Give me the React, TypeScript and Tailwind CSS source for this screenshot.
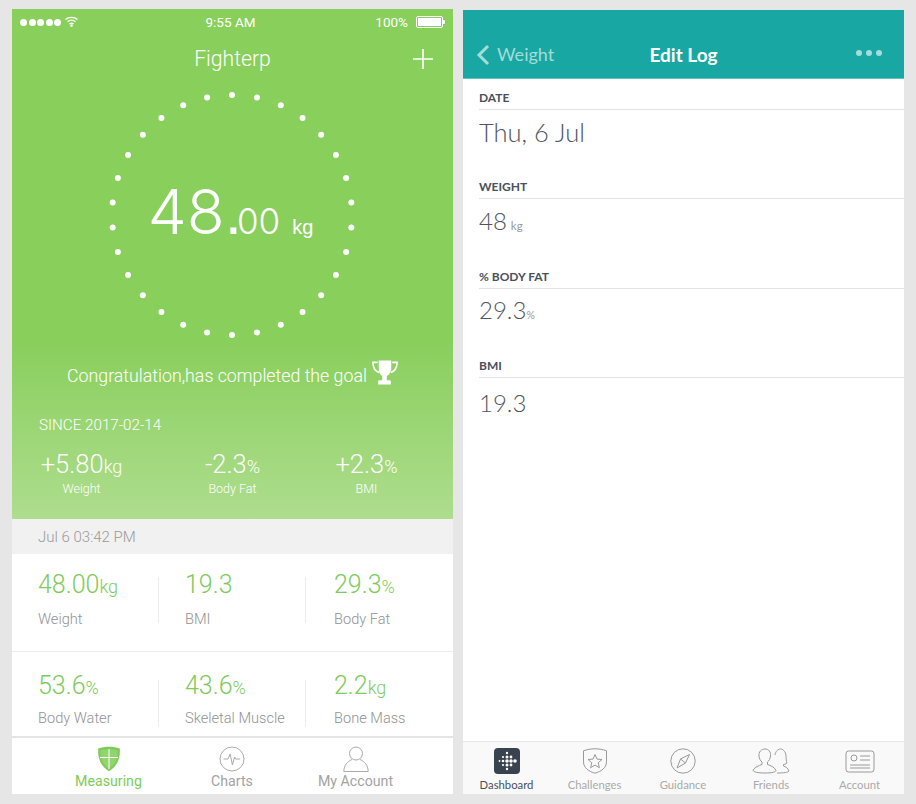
const ringDots = Array.from({ length: 30 }, (_, i) => {
  const a = (i * 12 * Math.PI) / 180;
  return { x: 125 + 120 * Math.sin(a), y: 125 - 120 * Math.cos(a) };
});

const sinceStats = [
  { sign: '+', value: '5.80', unit: 'kg', label: 'Weight', cls: 'w-[139px]' },
  { sign: '-', value: '2.3', unit: '%', label: 'Body Fat', cls: 'w-[163px]' },
  { sign: '+', value: '2.3', unit: '%', label: 'BMI', cls: 'w-[105px]' },
];

const rowOne = [
  { value: '48.00', unit: 'kg', label: 'Weight' },
  { value: '19.3', unit: '', label: 'BMI' },
  { value: '29.3', unit: '%', label: 'Body Fat' },
];

const rowTwo = [
  { value: '53.6', unit: '%', label: 'Body Water' },
  { value: '43.6', unit: '%', label: 'Skeletal Muscle' },
  { value: '2.2', unit: 'kg', label: 'Bone Mass' },
];

const logFields = [
  { label: 'DATE', value: 'Thu, 6 Jul', unit: '', cls: 'h-[89px] text-[25.5px]', valueCls: 'mt-[7px]' },
  { label: 'WEIGHT', value: '48', unit: 'kg', cls: 'h-[90px] text-[24px]', valueCls: 'mt-[7px]' },
  { label: '% BODY FAT', value: '29.3', unit: '%', cls: 'h-[89px] text-[24px]', valueCls: 'mt-[6px]' },
  { label: 'BMI', value: '19.3', unit: '', cls: 'h-[90px] text-[24px]', valueCls: 'mt-[10px]' },
];

function StatusBar() {
  return (
    <div className="h-[24px] flex items-center justify-between pl-[8px] pr-[8px] pt-[2px] text-[13.5px] text-white">
      <div className="w-[118px] flex items-center gap-[1.5px]">
        {[0, 1, 2, 3, 4].map(i => (
          <span key={i} className="w-[7px] h-[7px] rounded-full bg-white" />
        ))}
        <svg width="15" height="11" viewBox="0 0 14 11" className="ml-[1px] -mt-[2px]" fill="none" stroke="white" strokeWidth="1.3">
          <path d="M1 3.6C4.4.7 9.6.7 13 3.6" />
          <path d="M3 5.8c2.3-1.9 5.7-1.9 8 0" />
          <path d="M5 8c1.2-1 2.8-1 4 0" />
          <circle cx="7" cy="9.6" r=".7" fill="white" />
        </svg>
      </div>
      <span>9:55 AM</span>
      <div className="w-[122px] flex items-center justify-end gap-[8px]">
        <span>100%</span>
        <div className="flex items-center">
          <div className="w-[27px] h-[12px] border border-white rounded-[2px] p-[1px]">
            <div className="w-full h-full bg-white" />
          </div>
          <div className="w-[2px] h-[4px] bg-white rounded-r-[1px]" />
        </div>
      </div>
    </div>
  );
}

function Trophy() {
  return (
    <svg width="26" height="30" viewBox="0 0 27 30" fill="white">
      <path d="M7 1h13v8c0 4.2-2.4 7-4.6 8v4.5h2.6c1 0 1.6.6 1.6 1.5v3H6.400v-3c0-.9.6-1.500 1.600-1.500h2.600V17C8.400 16 7 13.200 7 9V1z" />
      <path d="M6 3H1c0 5.500 2.200 9 6.500 10.500M21 3h5c0 5.500-2.200 9-6.500 10.500" fill="none" stroke="white" strokeWidth="1.800" />
    </svg>
  );
}

function MetricCell({ value, unit, label, cls, innerCls, gapCls }: { value: string; unit: string; label: string; cls: string; innerCls: string; gapCls: string }) {
  return (
    <div className={`w-[147px] h-[46px] ${cls}`}>
      <div className={innerCls}>
        <div className="text-[25px] leading-[32px] text-[#7ecb5a] font-light whitespace-nowrap">
          {value}
          <span className="text-[18px]">{unit}</span>
        </div>
        <div className={`text-[14.600px] leading-[18px] text-[#929292] font-light whitespace-nowrap ${gapCls}`}>{label}</div>
      </div>
    </div>
  );
}

function MetricRow({ items, cls, innerCls, gapCls }: { items: typeof rowOne; cls: string; innerCls: string; gapCls: string }) {
  return (
    <div className={cls}>
      <MetricCell {...items[0]} innerCls={innerCls} gapCls={gapCls} cls="border-r border-[#ececec] pl-[26px]" />
      <MetricCell {...items[1]} innerCls={innerCls} gapCls={gapCls} cls="border-r border-[#ececec] pl-[26px]" />
      <MetricCell {...items[2]} innerCls={innerCls} gapCls={gapCls} cls="pl-[28px]" />
    </div>
  );
}

function LeftPhone() {
  return (
    <div className="w-[441px] h-[785px] flex flex-col bg-white font-['Roboto',sans-serif]">
      <div className="h-[510px] flex flex-col bg-[linear-gradient(to_bottom,#89cf5c_0%,#89cf5c_65%,#aedd8e_100%)] text-white">
        <StatusBar />
        <div className="h-[52px] flex items-center justify-center relative">
          <span className="text-[21.200px] font-light">Fighterp</span>
          <svg width="22" height="22" viewBox="0 0 22 22" className="absolute right-[19px] top-[15px]" stroke="white" strokeWidth="1.700">
            <path d="M11 1v20M1 11h20" />
          </svg>
        </div>
        <div className="relative h-[255px] flex items-center justify-center">
          <svg width="250" height="250" viewBox="0 0 250 250" className="absolute left-[95px] top-[5px]">
            {ringDots.map((d, i) => (
              <circle key={i} cx={d.x} cy={d.y} r="3" fill="white" />
            ))}
          </svg>
          <div className="flex items-baseline whitespace-nowrap -mt-[1px] pr-[4px] font-['Liberation_Sans',sans-serif]">
            <span className="text-[62px] leading-none font-['Inter',sans-serif] font-light">48</span>
            <span className="text-[62px] leading-none tracking-[-5px]">.</span>
            <span className="text-[35px] leading-none font-['Inter',sans-serif] font-light">00</span>
            <span className="text-[20px] leading-none ml-[12px]">kg</span>
          </div>
        </div>
        <div className="h-[42px] flex items-center justify-center gap-[5px] mt-[15px] text-[17.750px] font-light">
          <span>Congratulation,has completed the goal</span>
          <div className="-mt-[4px]">
            <Trophy />
          </div>
        </div>
        <div className="pl-[27px] mt-[18px] text-[15.200px] leading-[20px] font-light">SINCE 2017-02-14</div>
        <div className="flex mt-[14px]">
          {sinceStats.map(s => (
            <div key={s.label} className={`${s.cls} flex flex-col items-center`}>
              <div className="text-[25.500px] leading-[30px] font-light whitespace-nowrap">
                {s.sign}
                {s.value}
                <span className="text-[18px]">{s.unit}</span>
              </div>
              <div className="text-[12.500px] leading-[16px] -mt-[1px] font-light">{s.label}</div>
            </div>
          ))}
        </div>
      </div>
      <div className="h-[35px] flex items-center pl-[26px] pt-[1px] bg-[#f1f1f1] text-[15px] text-[#999] font-light">Jul 6 03:42 PM</div>
      <MetricRow items={rowOne} innerCls="-mt-[8px]" gapCls="mt-[7px]" cls="h-[98px] flex pt-[23px] border-b border-[#ececec]" />
      <MetricRow items={rowTwo} innerCls="-mt-[10px]" gapCls="mt-[5px]" cls="h-[84px] flex pt-[28px]" />
      <div className="flex-1 flex border-t-2 border-[#e4e4e4] pl-[33px] pt-[8px] text-[14.200px] text-[#a3a3a3]">
        <div className="w-[127px] flex flex-col items-center text-[#7ecb5a]">
          <svg width="24" height="26" viewBox="0 0 24 26">
            <path d="M12 .8c3.500 0 7.500.5 10.800 1.700.6 8.500-1.800 17.500-10.800 22.700C3 20 .6 11 1.200 2.500 4.500 1.300 8.500.8 12 .8z" fill="#7ecb5a" />
            <path d="M12 3.400c2.700 0 6 .3 8.500 1.100.2 6.500-1.700 14-8.500 18-6.800-4-8.700-11.500-8.500-18 2.500-.8 5.800-1.100 8.500-1.100z" fill="#92d56e" />
            <path d="M12 3v20M3 11.500h18" stroke="white" strokeWidth="1" />
          </svg>
          <span className="leading-[18px] whitespace-nowrap">Measuring</span>
        </div>
        <div className="w-[120px] flex flex-col items-center">
          <svg width="26" height="26" viewBox="0 0 26 26" fill="none" stroke="#aaa" strokeWidth="1">
            <circle cx="13" cy="13" r="12" />
            <path d="M4.500 13H9l2.200-5 2.200 11 2.200-8 1 2h4.500" />
          </svg>
          <span className="leading-[18px] whitespace-nowrap">Charts</span>
        </div>
        <div className="w-[127px] flex flex-col items-center">
          <svg width="26" height="26" viewBox="0 0 26 26" fill="none" stroke="#aaa" strokeWidth="1">
            <circle cx="13" cy="7.500" r="6.500" />
            <path d="M9 13.500C4.500 15.500 1 19 .8 25.500h24.400c-.2-6.500-3.700-10-8.200-12" />
          </svg>
          <span className="leading-[18px] whitespace-nowrap">My Account</span>
        </div>
      </div>
    </div>
  );
}

function RightPhone() {
  return (
    <div className="w-[441px] h-[784px] mt-[1px] flex flex-col bg-white font-['Lato',sans-serif]">
      <div className="h-[69px] flex items-end bg-[#18a7a3] border-b border-[#5cc3bf] relative">
        <div className="h-[43px] w-full flex items-center justify-center text-[19px] mb-[1px]">
          <span className="font-bold text-white">Edit Log</span>
        </div>
        <div className="absolute left-[13px] top-[31px] flex items-center gap-[7px] text-[18px] text-[#a3dcd9]">
          <svg width="14" height="22" viewBox="0 0 14 22" fill="none" stroke="#a3dcd9" strokeWidth="3">
            <path d="M12 2 3 11l9 9" />
          </svg>
          <span>Weight</span>
        </div>
        <div className="absolute right-[22px] top-[40px] flex gap-[4px]">
          <span className="w-[6px] h-[6px] rounded-full bg-[#a3dcd9]" />
          <span className="w-[6px] h-[6px] rounded-full bg-[#a3dcd9]" />
          <span className="w-[6px] h-[6px] rounded-full bg-[#a3dcd9]" />
        </div>
      </div>
      <div className="flex-1 pl-[16px] pt-[12px]">
        {logFields.map(f => (
          <div key={f.label} className={f.cls}>
            <div className="h-[19px] text-[12px] leading-[13px] font-bold text-[#4a505b] border-b border-[#e3e3e3]">{f.label}</div>
            <div className={`leading-[30px] font-light text-[#50555e] whitespace-nowrap ${f.valueCls}`}>
              {f.value}
              {f.unit && <span className={f.unit === 'kg' ? 'text-[11.500px] font-normal text-[#999] ml-[4px]' : 'text-[10.500px] font-normal text-[#999]'}>{f.unit}</span>}
            </div>
          </div>
        ))}
      </div>
      <div className="h-[53px] flex bg-[#f9f9f9] border-t border-[#e6e6e6] pt-[6px] text-[11.300px] text-[#aaa]">
        <div className="w-[87px] flex flex-col items-center text-[#49505c]">
          <div className="w-[26px] h-[26px] rounded-[4px] bg-[#39424f] flex items-center justify-center">
            <svg width="20" height="20" viewBox="0 0 20 20" fill="white">
              {[[10, 2, 1.200], [10, 6, 1.500], [10, 10, 1.800], [10, 14, 1.500], [10, 18, 1.200], [6, 6, 1.100], [6, 10, 1.300], [6, 14, 1.100], [2.500, 10, .9], [14, 6, 1.400], [14, 10, 1.800], [14, 14, 1.400], [18, 10, 1.800]].map(([x, y, r]) => (
                <circle key={`${x}-${y}`} cx={x} cy={y} r={r} />
              ))}
            </svg>
          </div>
          <span className="mt-[4px] leading-[14px] whitespace-nowrap">Dashboard</span>
        </div>
        <div className="w-[89px] flex flex-col items-center">
          <svg width="26" height="26" viewBox="0 0 26 26" fill="none" stroke="#999" strokeWidth="1">
            <path d="M13 .8c4 0 8 .7 11.500 2v11C24.500 20 19 23.500 13 25.200 7 23.500 1.500 20 1.500 13.800v-11C5 1.500 9 .8 13 .8z" />
            <path d="m13 6.500 2 4.600 5 .4-3.800 3.300 1.200 4.900-4.400-2.600-4.400 2.600 1.200-4.900L6 11.500l5-.4 2-4.600z" />
          </svg>
          <span className="mt-[4px] leading-[14px] whitespace-nowrap">Challenges</span>
        </div>
        <div className="w-[88px] flex flex-col items-center">
          <svg width="26" height="26" viewBox="0 0 26 26" fill="none" stroke="#999" strokeWidth="1">
            <circle cx="13" cy="13" r="12.200" />
            <path d="M19.500 6.500 15.500 15 7 20l3.500-9 9-4.500zM10.500 11l5 4" />
          </svg>
          <span className="mt-[4px] leading-[14px] whitespace-nowrap">Guidance</span>
        </div>
        <div className="w-[88px] flex flex-col items-center">
          <svg width="38" height="26" viewBox="0 0 38 26" fill="none" stroke="#999" strokeWidth="1">
            <path d="M13 1c3.800 0 6 3 5.500 7-.3 2.500-1.500 5-3 6v2.500c3 1 7 2.500 8.500 6-.5 1.500-3 2.500-11 2.500S2 24 1 22.500c1.500-3.500 6-5 9-6V14c-1.500-1-2.800-3.500-3-6C6.500 4 9.200 1 13 1z" />
            <path d="M23 7c.5-3.500 3-6 5.500-6s5 2.500 5.500 6.500c.3 2.500 0 6 1 7.500-1 1-3 1.500-3.500 1.500V18c2 .7 4.500 2 5.500 5-1 1.500-5 2-12 2" />
          </svg>
          <span className="mt-[4px] leading-[14px] whitespace-nowrap">Friends</span>
        </div>
        <div className="w-[89px] flex flex-col items-center">
          <svg width="30" height="26" viewBox="0 0 30 26" fill="none" stroke="#999" strokeWidth="1">
            <rect x="1" y="3" width="28" height="21" rx="2.500" />
            <circle cx="9" cy="10" r="3" />
            <path d="M15 8h10M15 12h10M5 17h20M5 20h20" />
          </svg>
          <span className="mt-[4px] leading-[14px] whitespace-nowrap">Account</span>
        </div>
      </div>
    </div>
  );
}

export default function App() {
  return (
    <div className="w-[916px] h-[804px] flex gap-[10px] bg-[#e6e6e6] pl-[12px] pt-[9px] overflow-hidden">
      <LeftPhone />
      <RightPhone />
    </div>
  );
}
